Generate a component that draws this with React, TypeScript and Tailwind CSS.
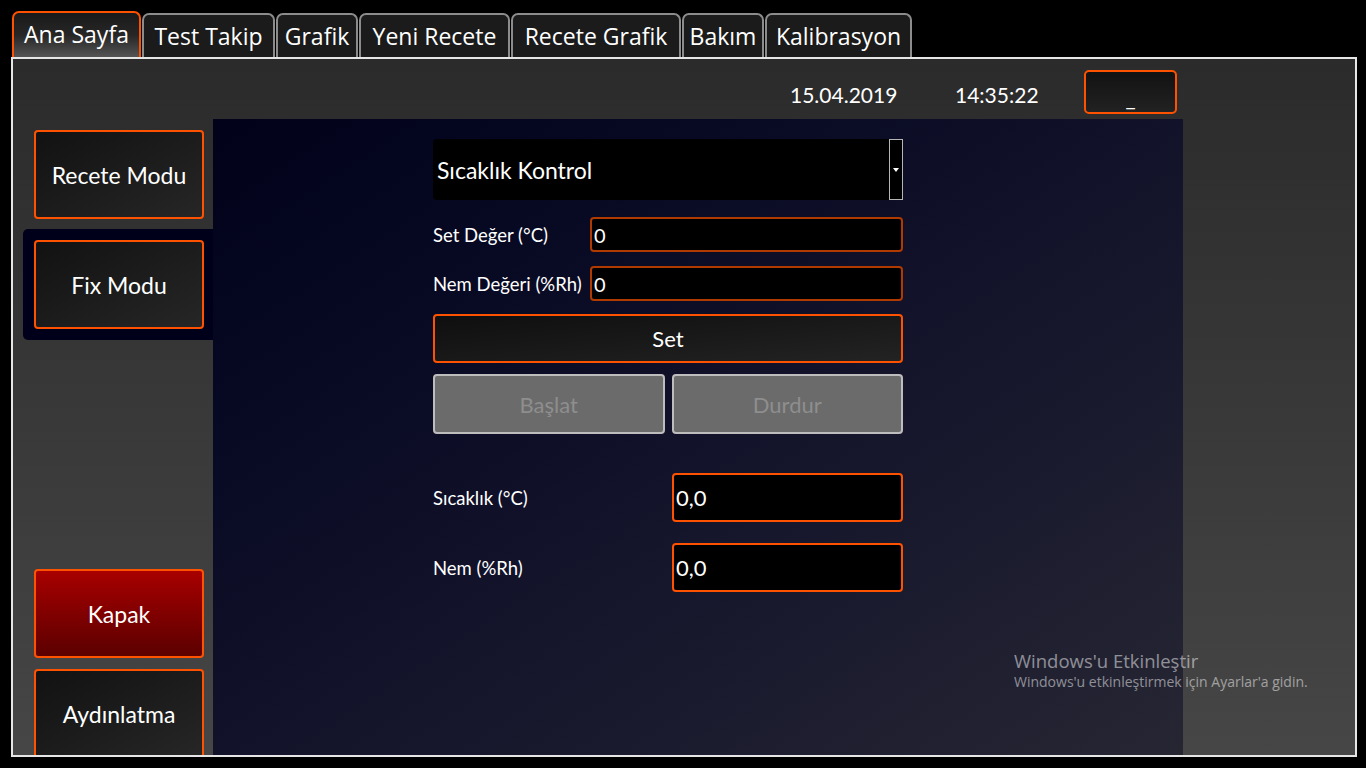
import React from 'react';

const gill = { fontFamily: '"Lato", "Open Sans", sans-serif' };

const tabs = [
  { label: 'Ana Sayfa', w: 'w-[129px]' },
  { label: 'Test Takip', w: 'w-[133px]' },
  { label: 'Grafik', w: 'w-[82px]' },
  { label: 'Yeni Recete', w: 'w-[151px]' },
  { label: 'Recete Grafik', w: 'w-[170px]' },
  { label: 'Bakım', w: 'w-[82px]' },
  { label: 'Kalibrasyon', w: 'w-[147px]' },
];

function Tab({ label, w, active }: { label: string; w: string; active?: boolean }) {
  if (active) {
    return (
      <div className={`${w} shrink-0 h-[46px] flex items-center justify-center rounded-t-[7px] border-2 border-b-0 border-[#ff5200] bg-gradient-to-b from-[#1a1a1a] via-[#262626] to-[#555555] text-white text-[23px] leading-none pb-[2px]`}>
        {label}
      </div>
    );
  }
  return (
    <div className={`${w} shrink-0 h-[44px] flex items-center justify-center rounded-t-[7px] border-2 border-b-0 border-[#8c8c8c] bg-[#1b1b1b] text-white text-[23px] leading-none`}>
      {label}
    </div>
  );
}

function SideButton({ label, red }: { label: string; red?: boolean }) {
  return (
    <div
      className={`w-[170px] h-[89px] shrink-0 rounded-[4px] border-2 border-[#ff5200] flex items-center justify-center pt-[2px] text-white text-[23px] ${
        red ? 'bg-gradient-to-b from-[#a80000] to-[#5c0000]' : 'bg-gradient-to-br from-[#121212] to-[#262626]'
      }`}
      style={gill}
    >
      {label}
    </div>
  );
}

function InputRow({ label, value }: { label: string; value: string }) {
  return (
    <div className="flex items-center h-[35px]">
      <div className="w-[157px] text-white text-[18.5px] pt-[2px]">{label}</div>
      <div className="flex-1 h-[35px] rounded-[4px] border-2 border-[#b03a00] bg-black text-white text-[20px] flex items-center pl-[2px]">
        {value}
      </div>
    </div>
  );
}

function ReadRow({ label, value }: { label: string; value: string }) {
  return (
    <div className="flex items-center h-[49px]">
      <div className="w-[239px] text-white text-[18.5px] pt-[3px]">{label}</div>
      <div className="flex-1 h-[49px] rounded-[4px] border-2 border-[#ff5200] bg-black text-white text-[22px] flex items-center pl-[2px]">
        {value}
      </div>
    </div>
  );
}

export default function App() {
  return (
    <div className="w-[1366px] h-[768px] bg-black overflow-hidden" style={{ fontFamily: '"Open Sans", "Noto Sans", sans-serif' }}>
      {/* tabs */}
      <div className="h-[57px] pl-[12px] flex items-end gap-[1px]">
        {tabs.map((t, i) => (
          <Tab key={t.label} label={t.label} w={t.w} active={i === 0} />
        ))}
      </div>

      {/* main frame */}
      <div className="ml-[11px] w-[1346px] h-[700px] border-2 border-[#e6e6e6] bg-gradient-to-b from-[#2b2b2b] to-[#464646] flex flex-col" style={gill}>
        {/* header */}
        <div className="h-[60px] shrink-0 flex items-start text-white text-[21px]">
          <div className="ml-[777px] w-[165px] mt-[20px]">15.04.2019</div>
          <div className="w-[129px] mt-[20px]">14:35:22</div>
          <div className="w-[93px] h-[44px] mt-[11px] rounded-[5px] border-2 border-[#ff5200] bg-gradient-to-b from-[#121212] to-[#222222] flex items-end justify-center pb-[3px]">
            <span className="leading-none text-[22px]">_</span>
          </div>
        </div>

        {/* body */}
        <div className="flex-1 flex min-h-0">
          {/* sidebar */}
          <div className="w-[200px] shrink-0 flex flex-col pt-[11px] overflow-hidden">
            <div className="pl-[21px]">
              <SideButton label="Recete Modu" />
            </div>
            <div className="mt-[10px] ml-[10px] pl-[11px] py-[11px] bg-[#00001a] rounded-l-[5px]">
              <SideButton label="Fix Modu" />
            </div>
            <div className="pl-[21px] mt-[229px] flex flex-col gap-[11px]">
              <SideButton label="Kapak" red />
              <SideButton label="Aydınlatma" />
            </div>
          </div>

          {/* center */}
          <div className="w-[970px] shrink-0 bg-gradient-to-br from-[#02021a] via-[#12122a] to-[#262633]">
            <div className="ml-[220px] w-[470px] pt-[20px] flex flex-col">
              <div className="h-[61px] rounded-[4px] bg-black flex items-center relative">
                <span className="ml-[4px] pt-[2px] text-white text-[23px]">Sıcaklık Kontrol</span>
                <div className="absolute right-0 top-0 w-[14px] h-[61px] border border-[#b5b5b5] bg-black flex items-center justify-center">
                  <svg width="6" height="4" viewBox="0 0 6 4">
                    <path d="M0 0h6L3 4z" fill="#fff" />
                  </svg>
                </div>
              </div>
              <div className="mt-[17px] flex flex-col gap-[14px]">
                <InputRow label="Set Değer (°C)" value="0" />
                <InputRow label="Nem Değeri (%Rh)" value="0" />
              </div>
              <div className="mt-[13px] h-[49px] rounded-[4px] border-2 border-[#ff5200] bg-gradient-to-br from-[#0f0f0f] to-[#232323] flex items-center justify-center text-white text-[22px]">
                Set
              </div>
              <div className="mt-[11px] flex gap-[7px]">
                <div className="flex-1 h-[60px] rounded-[4px] border-2 border-[#bdbdbd] bg-[#6b6b6b] flex items-center justify-center text-[#8e8e8e] text-[22px]">
                  Başlat
                </div>
                <div className="flex-1 h-[60px] rounded-[4px] border-2 border-[#bdbdbd] bg-[#6b6b6b] flex items-center justify-center text-[#8e8e8e] text-[22px]">
                  Durdur
                </div>
              </div>
              <div className="mt-[39px] flex flex-col gap-[21px]">
                <ReadRow label="Sıcaklık (°C)" value="0,0" />
                <ReadRow label="Nem (%Rh)" value="0,0" />
              </div>
            </div>
          </div>

          <div className="flex-1" />
        </div>
      </div>

      {/* windows activation watermark */}
      <div className="absolute left-[1014px] top-[649px] text-white/50 leading-tight" style={{ fontFamily: '"Open Sans", sans-serif' }}>
        <div className="text-[18.5px]">Windows'u Etkinleştir</div>
        <div className="text-[14px] mt-[1px]">Windows'u etkinleştirmek için Ayarlar'a gidin.</div>
      </div>
    </div>
  );
}
